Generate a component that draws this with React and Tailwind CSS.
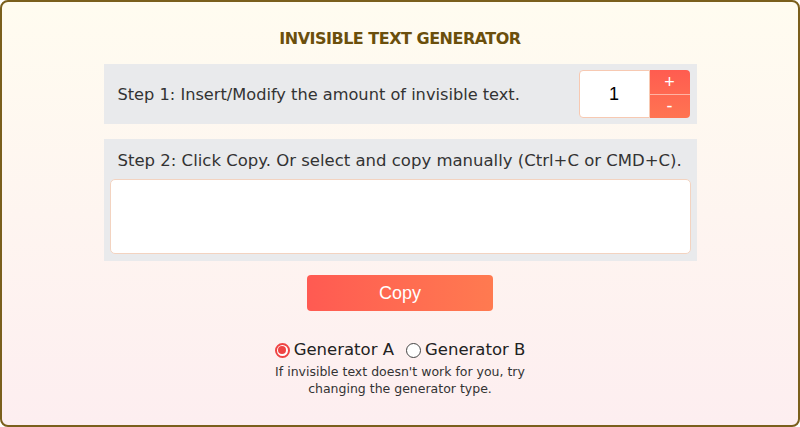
import React, { useState } from "react";

const font = { fontFamily: '"DejaVu Sans", "Noto Sans", sans-serif' };
const arial = { fontFamily: '"Liberation Sans", Arial, sans-serif' };

const Radio = ({ checked }) =>
  checked ? (
    <span className="w-[15px] h-[15px] rounded-full border-2 border-[#ef4444] flex items-center justify-center bg-white">
      <span className="w-[8px] h-[8px] rounded-full bg-[#ef4444]" />
    </span>
  ) : (
    <span className="w-[15px] h-[15px] rounded-full border border-[#444] bg-white" />
  );

const App = () => {
  const [amount, setAmount] = useState(1);
  const [gen, setGen] = useState("A");

  return (
    <div
      className="w-[800px] h-[427px] border-2 border-[#7a5f1c] rounded-lg bg-gradient-to-b from-[#fffcf0] to-[#fdeef0] overflow-hidden"
      style={font}
    >
      <h1 className="text-center text-[16px] font-bold text-[#6b4f0c] mt-[25px] leading-[24px] tracking-[-0.5px]">
        INVISIBLE TEXT GENERATOR
      </h1>

      <div className="w-[593px] mx-auto mt-[13px]">
        <div className="h-[60px] bg-[#e9eaec] flex items-center justify-between pl-[14px] pr-[7px]">
          <span className="text-[16.2px] text-[#333] pt-[2px]">
            Step 1: Insert/Modify the amount of invisible text.
          </span>
          <div className="flex h-[48px]">
            <input
              value={amount}
              onChange={(e) => setAmount(e.target.value)}
              className="w-[71px] h-full bg-white border border-[#f7c9b2] rounded-l-[4px] text-center text-[18px] text-black outline-none"
              style={arial}
            />
            <div className="w-[40px] flex flex-col rounded-r-[4px] overflow-hidden bg-gradient-to-b from-[#ff5c50] to-[#ff7452]">
              <button
                onClick={() => setAmount(Number(amount) + 1)}
                className="flex-1 text-white text-[18px] leading-none border-b border-[#ffb3a3]"
                style={arial}
              >
                +
              </button>
              <button
                onClick={() => setAmount(Math.max(0, Number(amount) - 1))}
                className="flex-1 text-white text-[18px] leading-none"
                style={arial}
              >
                -
              </button>
            </div>
          </div>
        </div>

        <div className="mt-[15px] bg-[#e9eaec] px-[6px] pt-[9px] pb-[7px]">
          <p className="text-[16.5px] text-[#333] pl-[8px] leading-[26px] mb-[5px] whitespace-nowrap">
            Step 2: Click Copy. Or select and copy manually (Ctrl+C or CMD+C).
          </p>
          <textarea className="block w-full h-[75px] bg-white border border-[#f3d3c0] rounded-[5px] resize-none outline-none" />
        </div>
      </div>

      <div className="flex justify-center mt-[14px]">
        <button
          className="w-[186px] h-[36px] rounded-[4px] bg-gradient-to-r from-[#ff5a52] to-[#ff7a50] text-white text-[18px]"
          style={arial}
        >
          Copy
        </button>
      </div>

      <div className="flex justify-center items-center mt-[27px] text-[16.5px] text-[#222] leading-[24px]">
        <label className="flex items-center gap-[4px] mr-[12px]" onClick={() => setGen("A")}>
          <Radio checked={gen === "A"} />
          Generator A
        </label>
        <label className="flex items-center gap-[4px]" onClick={() => setGen("B")}>
          <Radio checked={gen === "B"} />
          Generator B
        </label>
      </div>
      <p className="text-center text-[12.5px] text-[#333] leading-[17px] mt-[1px]">
        If invisible text doesn't work for you, try
        <br />
        changing the generator type.
      </p>
    </div>
  );
};

export default App;
